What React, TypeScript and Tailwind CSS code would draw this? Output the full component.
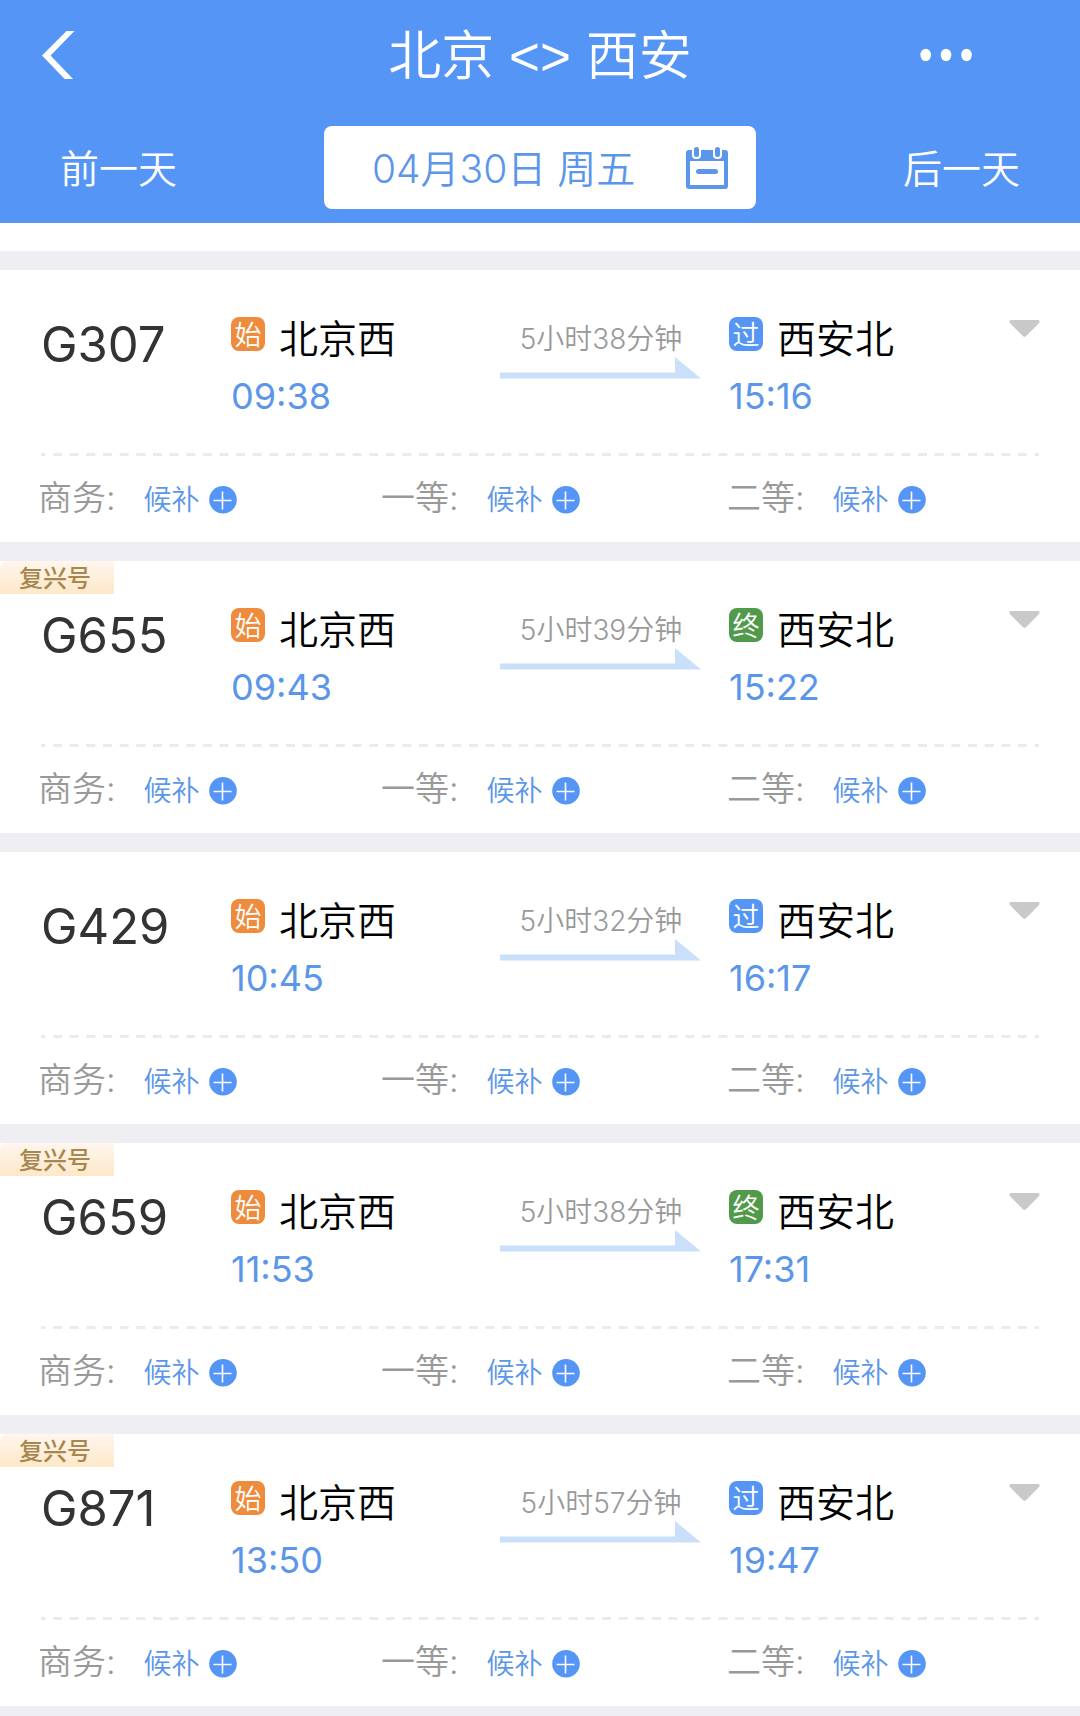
import { useState } from "react";

type StopKind = "start" | "pass" | "end";

interface Stop {
  kind: StopKind;
  name: string;
  time: string;
}

interface Train {
  code: string;
  fuxing: boolean;
  from: Stop;
  to: Stop;
  duration: string;
}

const STOP_LABELS: Record<StopKind, string> = { start: "始", pass: "过", end: "终" };

const STOP_COLORS: Record<StopKind, string> = {
  start: "bg-[#ee8b3c]",
  pass: "bg-[#5595f5]",
  end: "bg-[#529a4b]",
};

const SEATS = ["商务", "一等", "二等"];

const TRAINS: Train[] = [
  {
    code: "G307",
    fuxing: false,
    from: { kind: "start", name: "北京西", time: "09:38" },
    to: { kind: "pass", name: "西安北", time: "15:16" },
    duration: "5小时38分钟",
  },
  {
    code: "G655",
    fuxing: true,
    from: { kind: "start", name: "北京西", time: "09:43" },
    to: { kind: "end", name: "西安北", time: "15:22" },
    duration: "5小时39分钟",
  },
  {
    code: "G429",
    fuxing: false,
    from: { kind: "start", name: "北京西", time: "10:45" },
    to: { kind: "pass", name: "西安北", time: "16:17" },
    duration: "5小时32分钟",
  },
  {
    code: "G659",
    fuxing: true,
    from: { kind: "start", name: "北京西", time: "11:53" },
    to: { kind: "end", name: "西安北", time: "17:31" },
    duration: "5小时38分钟",
  },
  {
    code: "G871",
    fuxing: true,
    from: { kind: "start", name: "北京西", time: "13:50" },
    to: { kind: "pass", name: "西安北", time: "19:47" },
    duration: "5小时57分钟",
  },
];

function CalendarIcon() {
  return (
    <svg width="42" height="42" viewBox="0 0 42 42" fill="none" aria-hidden="true">
      <path
        fillRule="evenodd"
        fill="#5b96ea"
        d="M3 3H39Q42 3 42 6V39Q42 42 39 42H3Q0 42 0 39V6Q0 3 3 3ZM4 14V38H38V14Z"
      />
      <rect x="6" y="-2" width="9" height="14" rx="4" fill="#fff" />
      <rect x="27" y="-2" width="9" height="14" rx="4" fill="#fff" />
      <rect x="8" y="0" width="5" height="10" rx="2.5" fill="#5b96ea" />
      <rect x="29" y="0" width="5" height="10" rx="2.5" fill="#5b96ea" />
      <rect x="10" y="22" width="22" height="5" rx="2.5" fill="#5b96ea" />
    </svg>
  );
}

function PlusIcon() {
  return (
    <svg width="28" height="28" viewBox="0 0 28 28" aria-hidden="true">
      <circle cx="14" cy="13.8" r="13.8" fill="#5595f5" />
      <path d="M13.5 5.5V23.5M4.5 14.5H22.5" stroke="#fff" strokeWidth="1.6" />
    </svg>
  );
}

function Header() {
  return (
    <header className="bg-[#5595f5] text-white pb-[14px]">
      <div className="grid grid-cols-[1fr_auto_1fr] items-center h-[109px] px-10">
        <button type="button" aria-label="返回" className="justify-self-start">
          <svg width="36" height="48" viewBox="0 0 36 48" aria-hidden="true">
            <path d="M2 24.5L26.5 0H34.5L10.6 24.5L33 48H24.7Z" fill="#fff" />
          </svg>
        </button>
        <h1 className="pt-1 text-[53px] leading-[60px] font-[350] font-['Liberation_Sans','Noto_Sans_CJK_SC',sans-serif]">
          北京 &lt;&gt; 西安
        </h1>
        <button type="button" aria-label="更多" className="justify-self-end mr-[66px]">
          <svg width="56" height="14" viewBox="0 0 56 14" aria-hidden="true">
            <ellipse cx="7.7" cy="7" rx="5.3" ry="6.2" fill="#fff" />
            <ellipse cx="28" cy="7" rx="5.3" ry="6.2" fill="#fff" />
            <ellipse cx="48.5" cy="7" rx="5.3" ry="6.2" fill="#fff" />
          </svg>
        </button>
      </div>
      <div className="flex items-center justify-between px-[60px] pt-[17px] text-[39px] leading-[48px] font-[350]">
        <button type="button" className="pt-[2px]">前一天</button>
        <button
          type="button"
          className="flex items-center justify-between w-[45%] h-[83px] pl-12 pr-7 rounded-lg bg-white text-[#5b96ea]"
        >
          <span className="pt-[2px]">04月30日 周五</span>
          <CalendarIcon />
        </button>
        <button type="button" className="pt-[2px]">后一天</button>
      </div>
    </header>
  );
}

function StopInfo({ stop }: { stop: Stop }) {
  return (
    <div>
      <div className="flex items-start gap-[14px]">
        <span
          className={`flex items-center justify-center size-[34px] pt-1 rounded-lg text-[27px] leading-[30px] font-[350] text-white ${STOP_COLORS[stop.kind]}`}
        >
          {STOP_LABELS[stop.kind]}
        </span>
        <span className="text-[39px] leading-11 font-[350] text-black">{stop.name}</span>
      </div>
      <time className="block mt-[15px] text-[36px] leading-10 text-[#5b96ea]">{stop.time}</time>
    </div>
  );
}

function TrainCard({ train }: { train: Train }) {
  const [open, setOpen] = useState(false);

  return (
    <li className="relative bg-white">
      {train.fuxing && (
        <span className="absolute top-0 left-0 w-[114px] h-[33px] pl-[19px] rounded-tl-lg bg-linear-to-b from-[#fff6ee] to-[#fde8c8] text-2xl leading-9 font-medium text-[#a8874f]">
          复兴号
        </span>
      )}
      <div className="grid grid-cols-[190fr_269fr_229fr_280fr_31fr] items-start pl-[41px] pr-10 pt-[47px] pb-[37px]">
        <h2 className="text-[49px] leading-[56px] text-[#333]">{train.code}</h2>
        <StopInfo stop={train.from} />
        <div className="w-[202px]">
          <div className="text-[28px] leading-11 font-[350] text-center text-[#999]">{train.duration}</div>
          <svg className="-mt-1" width="202" height="22" viewBox="0 0 202 22" aria-hidden="true">
            <path d="M0 15.5H175V0L201 21.5H0Z" fill="#cadffa" />
          </svg>
        </div>
        <StopInfo stop={train.to} />
        <button type="button" aria-label="展开" aria-expanded={open} onClick={() => setOpen(!open)}>
          <svg width="31" height="24" viewBox="0 0 31 24" aria-hidden="true">
            <path d="M2 3H29Q32 3.6 29.6 6.6L17.5 18.8Q15.5 21 13.5 18.8L1.4 6.6Q-1 3.6 2 3Z" fill="#c9c9c9" />
          </svg>
        </button>
      </div>
      <div className="px-[41px]">
        <svg className="block w-full" height="3" aria-hidden="true">
          <line
            x1="0"
            y1="1.5"
            x2="100%"
            y2="1.5"
            pathLength="60"
            stroke="#ebebeb"
            strokeWidth="3"
            strokeDasharray="0.54 0.46"
            strokeDashoffset="0.27"
          />
        </svg>
      </div>
      <div className="grid grid-cols-[343fr_346fr_315fr] items-center h-[86px] px-[38px]">
        {SEATS.map((seat) => (
          <div key={seat} className="flex items-baseline gap-7">
            <span className="text-[34px] leading-10 font-[350] text-[#999]">{seat}:</span>
            <button
              type="button"
              className="flex items-center gap-[9px] text-[28px] leading-10 font-[350] text-[#5b96ea]"
            >
              候补
              <PlusIcon />
            </button>
          </div>
        ))}
      </div>
    </li>
  );
}

export default function App() {
  return (
    <div
      lang="zh-CN"
      className="min-h-screen bg-[#eeeef3] font-[Inter,'Noto_Sans_CJK_SC',sans-serif]"
    >
      <Header />
      <main>
        <div className="h-7 bg-white" />
        <ul className="flex flex-col gap-[19px] pt-[19px]">
          {TRAINS.map((train) => (
            <TrainCard key={train.code} train={train} />
          ))}
        </ul>
      </main>
    </div>
  );
}
